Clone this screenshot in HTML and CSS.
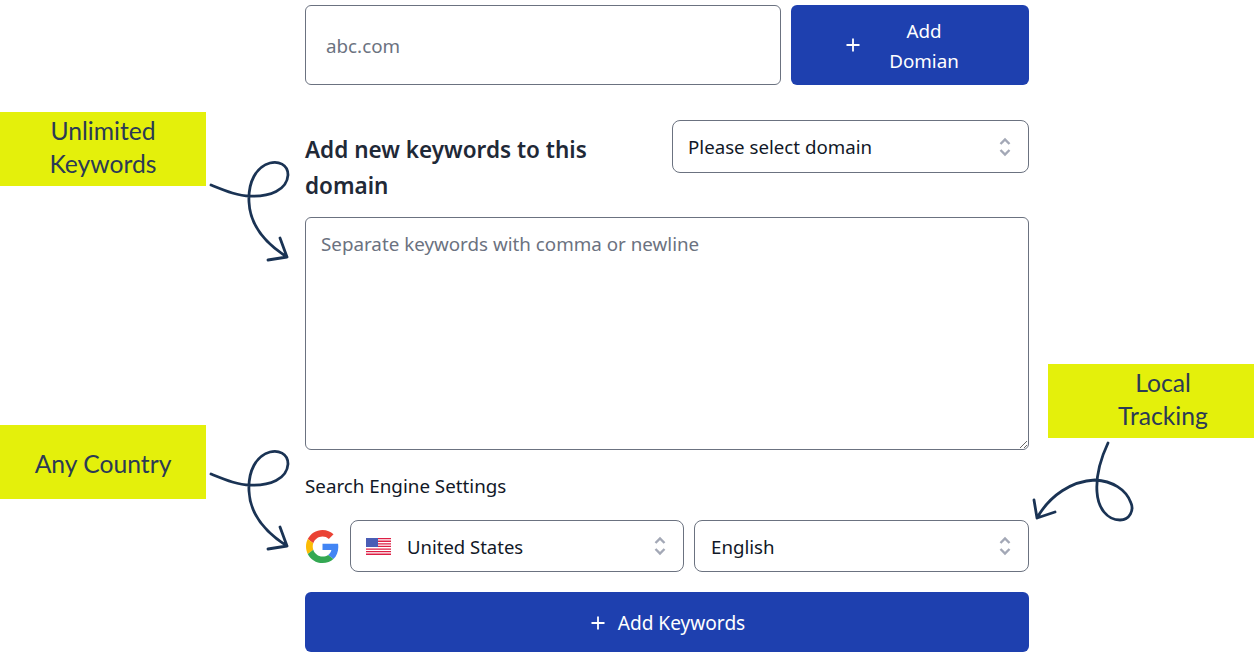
FILE: index.html
```html
<!DOCTYPE html>
<html lang="en">
<head>
<meta charset="utf-8">
<title>Add keywords</title>
<link rel="stylesheet" href="styles.css">
</head>
<body>
<main class="form">
  <div class="domain-row">
    <input class="field domain-input" type="text" placeholder="abc.com">
    <button class="btn btn-domain" type="button">
      <svg class="plus" viewBox="0 0 16 16"><path d="M8 1.500v13M1.500 8h13"/></svg>
      <span class="btn-domain-text">Add<br>Domian</span>
    </button>
  </div>
  <div class="heading-row">
    <h2 class="heading">Add new keywords to this domain</h2>
    <div class="select select-domain">
      <span>Please select domain</span>
      <svg class="chev" viewBox="0 0 14 22"><path d="M2.500 8 7 3.500 11.500 8M2.500 14 7 18.500 11.500 14"/></svg>
    </div>
  </div>
  <textarea class="field keywords" placeholder="Separate keywords with comma or newline"></textarea>
  <p class="settings-label">Search Engine Settings</p>
  <div class="settings-row">
    <svg class="google" viewBox="0 0 48 48">
      <path fill="#EA4335" d="M24 9.500c3.540 0 6.710 1.220 9.210 3.600l6.850-6.850C35.900 2.380 30.470 0 24 0 14.620 0 6.510 5.380 2.560 13.220l7.980 6.190C12.430 13.720 17.740 9.500 24 9.500z"/>
      <path fill="#4285F4" d="M46.980 24.550c0-1.570-.15-3.090-.38-4.550H24v9.020h12.940c-.58 2.960-2.260 5.480-4.780 7.180l7.730 6c4.510-4.180 7.090-10.360 7.090-17.650z"/>
      <path fill="#FBBC05" d="M10.530 28.590c-.48-1.450-.76-2.990-.76-4.590s.27-3.140.76-4.590l-7.980-6.190C.92 16.460 0 20.120 0 24c0 3.880.92 7.540 2.560 10.780l7.970-6.190z"/>
      <path fill="#34A853" d="M24 48c6.480 0 11.930-2.130 15.890-5.810l-7.730-6c-2.150 1.450-4.920 2.300-8.160 2.300-6.260 0-11.570-4.220-13.470-9.910l-7.980 6.190C6.510 42.620 14.620 48 24 48z"/>
    </svg>
    <div class="select select-country">
      <svg class="flag" viewBox="0 0 25 17">
        <rect width="25" height="17" fill="#fff"/>
        <path class="flag-stripes" d="M0 .65h25M0 3.250h25M0 5.850h25M0 8.450h25M0 11.050h25M0 13.650h25M0 16.250h25"/>
        <rect width="12" height="9" fill="#4a5db5"/>
      </svg>
      <span class="country-name">United States</span>
      <svg class="chev" viewBox="0 0 14 22"><path d="M2.500 8 7 3.500 11.500 8M2.500 14 7 18.500 11.500 14"/></svg>
    </div>
    <div class="select select-lang">
      <span>English</span>
      <svg class="chev" viewBox="0 0 14 22"><path d="M2.500 8 7 3.500 11.500 8M2.500 14 7 18.500 11.500 14"/></svg>
    </div>
  </div>
  <button class="btn btn-keywords" type="button">
    <svg class="plus" viewBox="0 0 16 16"><path d="M8 1.500v13M1.500 8h13"/></svg>
    <span>Add Keywords</span>
  </button>
</main>

<div class="note note-keywords">Unlimited<br>Keywords</div>
<div class="note note-country">Any Country</div>
<div class="note note-local">Local<br>Tracking</div>

<svg class="arrows" viewBox="0 0 1254 658">
  <path d="M211 185C226 191 238 196 250 196C270 197 287 190 288 175C288 164 278 161 270 163C256 167 248 182 249 202C250 225 265 243 287 257M280 238 287 257 268 260"/>
  <path d="M211 474C226 480 238 485 250 485C270 486 287 479 288 464C288 453 278 450 270 452C256 456 248 471 249 491C250 514 265 532 287 546M280 527 287 546 268 549"/>
  <path d="M1108 443C1100 460 1096 478 1097 492C1098 508 1107 520 1120 520C1130 520 1134 510 1131 503C1126 489 1112 481 1095 480C1072 481 1050 495 1037 518M1034 500 1037 518 1055 512"/>
</svg>
</body>
</html>
```
FILE: styles.css
```css
* { box-sizing: border-box; }
html, body { margin: 0; padding: 0; background: #fff; }
body {
  width: 1254px;
  height: 658px;
  overflow: hidden;
  position: relative;
  font-family: "Noto Sans", "Open Sans", sans-serif;
  color: #111827;
}
.form {
  width: 724px;
  margin-left: 305px;
  padding-top: 5px;
  display: flex;
  flex-direction: column;
}
.domain-row { display: flex; gap: 10px; height: 80px; }
.field {
  border: 1px solid #6b7280;
  border-radius: 6px;
  background: #fff;
  font: inherit;
  font-size: 18.800px;
  color: #111827;
  outline: none;
}
.field::placeholder { color: #6b7280; opacity: 1; }
.domain-input { width: 476px; height: 80px; padding: 1px 20px 0; }
.btn {
  border: 0;
  border-radius: 6px;
  background: #1e40af;
  color: #fff;
  font: inherit;
  font-size: 18.800px;
  display: flex;
  align-items: center;
  justify-content: center;
}
.plus { width: 16px; height: 16px; fill: none; stroke: #fff; stroke-width: 1.800; }
.btn-domain {
  width: 238px;
  height: 80px;
  gap: 18px;
  padding: 0 0 0 54px;
  line-height: 30px;
  justify-content: flex-start;
}
.btn-domain-text { width: 90px; text-align: center; padding-top: 2px; }
.heading-row {
  display: flex;
  justify-content: space-between;
  margin-top: 35px;
  height: 97px;
}
.heading {
  margin: 12px 0 0;
  width: 320px;
  font-size: 22.500px;
  font-weight: 600;
  line-height: 36px;
  color: #1f2937;
}
.select {
  display: flex;
  align-items: center;
  border: 1px solid #6b7280;
  border-radius: 8px;
  background: #fff;
  font-size: 18.700px;
  height: 52px;
  padding: 0 16px 0 15px;
  justify-content: space-between;
}
.select-domain { width: 357px; height: 53px; }
.chev {
  flex: none;
  width: 14px;
  height: 22px;
  fill: none;
  stroke: #a3a8b6;
  stroke-width: 2.400;
}
.keywords {
  display: block;
  width: 724px;
  height: 233px;
  padding: 13px 15px;
  resize: vertical;
}
.settings-label {
  margin: 23px 0 0;
  font-size: 18.800px;
  line-height: 26px;
  height: 47px;
}
.settings-row { display: flex; align-items: center; height: 52px; }
.google { flex: none; width: 33px; height: 33px; margin-left: 1px; margin-right: 11px; }
.select-country { width: 334px; padding-left: 15px; font-size: 18.500px; }
.flag { flex: none; width: 25px; height: 17px; margin-right: 16px; }
.flag-stripes { stroke: #dd1f45; stroke-width: 1.300; fill: none; }
.country-name { flex: 1; }
.select-lang { width: 335px; margin-left: 10px; padding-left: 16px; }
.btn-keywords {
  width: 724px;
  height: 60px;
  margin-top: 20px;
  gap: 12px;
  font-size: 19.100px;
  padding: 2px 0 0 1px;
}
.note {
  position: absolute;
  left: 0;
  width: 206px;
  height: 74px;
  background: #e4f00b;
  color: #2b3a55;
  font-family: "Lato", "Open Sans", sans-serif;
  font-size: 24.700px;
  line-height: 33px;
  text-align: center;
  padding-top: 2px;
}
.note-keywords { top: 112px; }
.note-country { top: 425px; padding-top: 22px; }
.note-local { top: 364px; left: 1048px; padding-left: 24px; }
.arrows {
  position: absolute;
  top: 0;
  left: 0;
  width: 1254px;
  height: 658px;
  fill: none;
  stroke: #1a3354;
  stroke-width: 2.800;
  stroke-linecap: round;
  stroke-linejoin: round;
  pointer-events: none;
}
```
